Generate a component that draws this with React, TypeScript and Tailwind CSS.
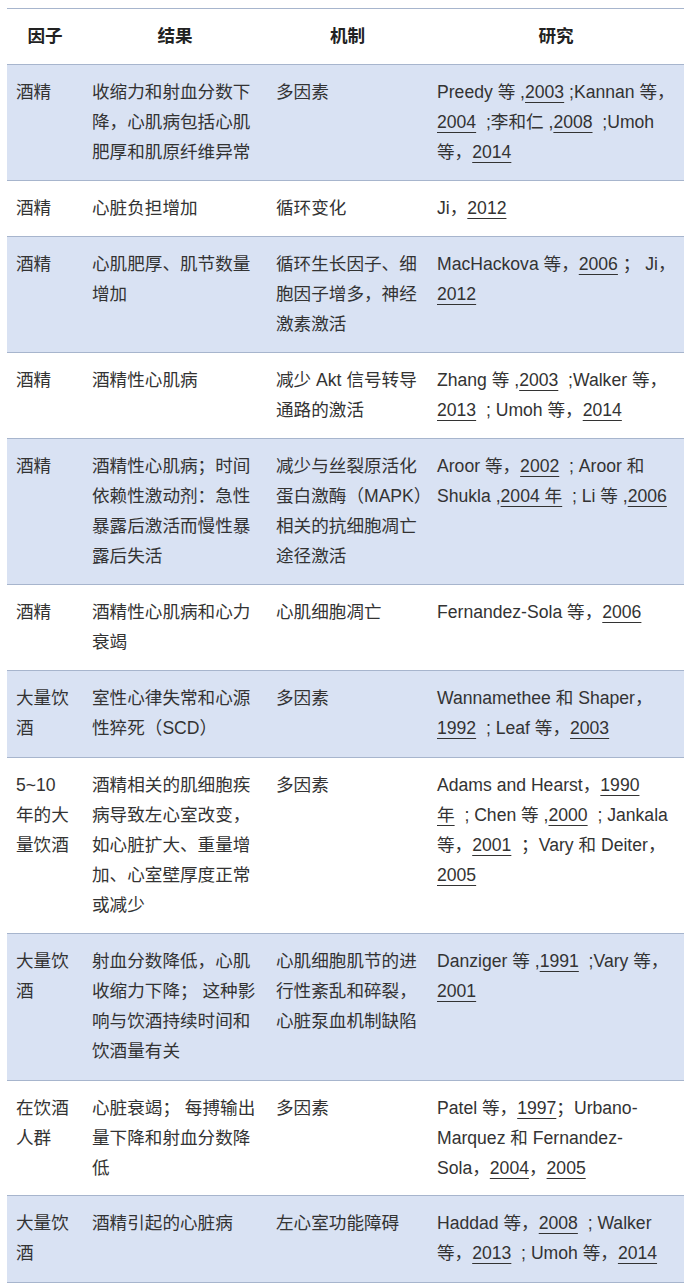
import React from "react";

type Seg = string | { u: string };
type Line = Seg[];
type Cell = Line[];

const L = (...segs: Seg[]): Line => segs;
const u = (t: string): Seg => ({ u: t });

interface Row {
  bg: boolean;
  pb: string;
  c: [Cell, Cell, Cell, Cell];
}

const rows: Row[] = [
  {
    bg: true,
    pb: "pb-[13px]",
    c: [
      [L("酒精")],
      [L("收缩力和射血分数下"), L("降，心肌病包括心肌"), L("肥厚和肌原纤维异常")],
      [L("多因素")],
      [
        L("Preedy 等 ,", u("2003"), " ;Kannan 等，"),
        L(u("2004"), "  ;李和仁 ,", u("2008"), "  ;Umoh"),
        L("等，", u("2014")),
      ],
    ],
  },
  {
    bg: false,
    pb: "pb-[13px]",
    c: [[L("酒精")], [L("心脏负担增加")], [L("循环变化")], [L("Ji，", u("2012"))]],
  },
  {
    bg: true,
    pb: "pb-[13px]",
    c: [
      [L("酒精")],
      [L("心肌肥厚、肌节数量"), L("增加")],
      [L("循环生长因子、细"), L("胞因子增多，神经"), L("激素激活")],
      [L("MacHackova 等，", u("2006"), " ； Ji，"), L(u("2012"))],
    ],
  },
  {
    bg: false,
    pb: "pb-[13px]",
    c: [
      [L("酒精")],
      [L("酒精性心肌病")],
      [L("减少 Akt 信号转导"), L("通路的激活")],
      [L("Zhang 等 ,", u("2003"), "  ;Walker 等，"), L(u("2013"), "  ; Umoh 等，", u("2014"))],
    ],
  },
  {
    bg: true,
    pb: "pb-[13px]",
    c: [
      [L("酒精")],
      [L("酒精性心肌病；时间"), L("依赖性激动剂：急性"), L("暴露后激活而慢性暴"), L("露后失活")],
      [L("减少与丝裂原活化"), L("蛋白激酶（MAPK）"), L("相关的抗细胞凋亡"), L("途径激活")],
      [L("Aroor 等，", u("2002"), "  ; Aroor 和"), L("Shukla ,", u("2004 年"), "  ; Li 等 ,", u("2006"))],
    ],
  },
  {
    bg: false,
    pb: "pb-[13px]",
    c: [
      [L("酒精")],
      [L("酒精性心肌病和心力"), L("衰竭")],
      [L("心肌细胞凋亡")],
      [L("Fernandez-Sola 等，", u("2006"))],
    ],
  },
  {
    bg: true,
    pb: "pb-[14px]",
    c: [
      [L("大量饮"), L("酒")],
      [L("室性心律失常和心源"), L("性猝死（SCD）")],
      [L("多因素")],
      [L("Wannamethee 和 Shaper，"), L(u("1992"), "  ; Leaf 等，", u("2003"))],
    ],
  },
  {
    bg: false,
    pb: "pb-[13px]",
    c: [
      [L("5~10"), L("年的大"), L("量饮酒")],
      [
        L("酒精相关的肌细胞疾"),
        L("病导致左心室改变，"),
        L("如心脏扩大、重量增"),
        L("加、心室壁厚度正常"),
        L("或减少"),
      ],
      [L("多因素")],
      [
        L("Adams and Hearst，", u("1990")),
        L(u("年"), "  ; Chen 等 ,", u("2000"), "  ; Jankala"),
        L("等，", u("2001"), "  ；Vary 和 Deiter，"),
        L(u("2005")),
      ],
    ],
  },
  {
    bg: true,
    pb: "pb-[14px]",
    c: [
      [L("大量饮"), L("酒")],
      [L("射血分数降低，心肌"), L("收缩力下降； 这种影"), L("响与饮酒持续时间和"), L("饮酒量有关")],
      [L("心肌细胞肌节的进"), L("行性紊乱和碎裂，"), L("心脏泵血机制缺陷")],
      [L("Danziger 等 ,", u("1991"), "  ;Vary 等，"), L(u("2001"))],
    ],
  },
  {
    bg: false,
    pb: "pb-[12px]",
    c: [
      [L("在饮酒"), L("人群")],
      [L("心脏衰竭； 每搏输出"), L("量下降和射血分数降"), L("低")],
      [L("多因素")],
      [L("Patel 等，", u("1997"), "；Urbano-"), L("Marquez 和 Fernandez-"), L("Sola，", u("2004"), "，", u("2005"))],
    ],
  },
  {
    bg: true,
    pb: "pb-[14px]",
    c: [
      [L("大量饮"), L("酒")],
      [L("酒精引起的心脏病")],
      [L("左心室功能障碍")],
      [L("Haddad 等，", u("2008"), "  ; Walker"), L("等，", u("2013"), "  ; Umoh 等，", u("2014"))],
    ],
  },
];

function CellView({ cell, pb }: { cell: Cell; pb: string }) {
  return (
    <div className={`pl-[9px] pr-[2px] pt-[12px] ${pb}`}>
      {cell.map((line, i) => (
        <div key={i} className="h-[30px] leading-[30px] whitespace-pre">
          {line.map((s, j) =>
            typeof s === "string" ? (
              <span key={j}>{s}</span>
            ) : (
              <span key={j} className="underline decoration-1 underline-offset-[4px]">
                {s.u}
              </span>
            )
          )}
        </div>
      ))}
    </div>
  );
}

const cols = "grid grid-cols-[76px_184px_161px_256px]";

export default function App() {
  return (
    <div
      className="w-[691px] h-[1287px] bg-white pt-[8px] pl-[7px] overflow-hidden"
      style={{ fontFamily: '"Liberation Sans", "Noto Sans CJK SC", sans-serif' }}
    >
      <div className="w-[677px] text-[17.6px] text-[#333333] border-b border-[#a7b5cd]">
        <div className={`${cols} border-t border-[#a7b5cd] bg-white`}>
          {["因子", "结果", "机制", "研究"].map((h) => (
            <div key={h} className="h-[55px] flex items-center justify-center font-bold text-[#222222]">
              {h}
            </div>
          ))}
        </div>
        {rows.map((r, i) => (
          <div
            key={i}
            className={`${cols} border-t border-[#a7b5cd] ${r.bg ? "bg-[#d9e2f3]" : "bg-white"}`}
          >
            {r.c.map((cell, k) => (
              <CellView key={k} cell={cell} pb={r.pb} />
            ))}
          </div>
        ))}
      </div>
    </div>
  );
}
